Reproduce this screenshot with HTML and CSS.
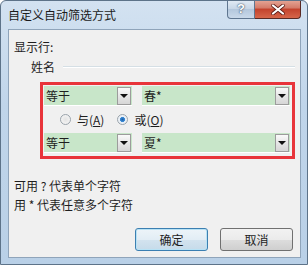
FILE: index.html
```html
<!DOCTYPE html>
<html lang="zh-CN">

<head>
    <meta charset="UTF-8">
    <title>自定义自动筛选方式</title>
    <link rel="stylesheet" href="styles.css">
</head>

<body>

    <div class="window">
        <!-- Title Bar -->
        <div class="titlebar">
            <span class="title">自定义自动筛选方式</span>
            <div class="caption-btns">
                <span class="help-btn">?</span>
                <span class="close-btn">
                    <svg width="14" height="11" viewBox="0 0 14 11">
                        <path d="M2 1.5 L12 9.5 M12 1.5 L2 9.5" stroke="#5a1a14" stroke-width="3.6" stroke-linecap="round"/>
                        <path d="M2 1.5 L12 9.5 M12 1.5 L2 9.5" stroke="#fff" stroke-width="2.2" stroke-linecap="round"/>
                    </svg>
                </span>
            </div>
        </div>

        <!-- Client Area -->
        <div class="client">
            <div class="label">显示行:</div>
            <div class="group-title">
                <span>姓名</span>
                <span class="sep"></span>
            </div>

            <div class="criteria">
                <div class="row">
                    <div class="combo op">
                        <span class="value">等于</span>
                        <span class="drop"><i></i></span>
                    </div>
                    <div class="combo val">
                        <span class="value">春*</span>
                        <span class="drop"><i></i></span>
                    </div>
                </div>
                <div class="radios">
                    <label class="radio"><span class="dot"></span><span>与(<u>A</u>)</span></label>
                    <label class="radio checked"><span class="dot"></span><span>或(<u>O</u>)</span></label>
                </div>
                <div class="row">
                    <div class="combo op">
                        <span class="value">等于</span>
                        <span class="drop"><i></i></span>
                    </div>
                    <div class="combo val">
                        <span class="value">夏*</span>
                        <span class="drop"><i></i></span>
                    </div>
                </div>
            </div>

            <div class="hints">
                <div>可用 ? 代表单个字符</div>
                <div>用 * 代表任意多个字符</div>
            </div>

            <div class="actions">
                <button class="btn default">确定</button>
                <button class="btn">取消</button>
            </div>
        </div>
    </div>

</body>

</html>
```

FILE: styles.css
```css
/* Basic layout */
body {
    margin: 0;
    padding: 0;
    font-family: "Noto Sans CJK SC", "DejaVu Sans", sans-serif;
    font-size: 12px;
    color: #1e1e1e;
}

/* Window frame */
.window {
    width: 308px;
    height: 265px;
    box-sizing: border-box;
    background: linear-gradient(180deg, #d3e2f1 0%, #c0d5ea 40%, #b9d0e7 100%);
    border: 1px solid #5d7389;
    border-radius: 6px 6px 0 0;
    display: flex;
    flex-direction: column;
    overflow: hidden;
}

/* Title bar */
.titlebar {
    height: 28px;
    display: flex;
    justify-content: space-between;
    flex-shrink: 0;
}

.title {
    padding: 5px 0 0 7px;
    font-size: 12px;
    color: #1b1b1b;
}

.caption-btns {
    display: flex;
    margin-right: 6px;
    height: 19px;
    margin-top: -1px;
}

.help-btn {
    width: 26px;
    height: 18px;
    border: 1px solid #5f7690;
    border-top: none;
    border-radius: 0 0 0 4px;
    background: linear-gradient(180deg, #e3ecf5 0%, #c7d6e6 50%, #b3c7dc 51%, #c9d9ea 100%);
    color: #fff;
    font-family: "Liberation Sans", Arial, sans-serif;
    font-weight: bold;
    font-size: 13px;
    text-align: center;
    line-height: 18px;
    text-shadow: 0 0 2px #3d5068, 0 0 1px #3d5068;
}

.close-btn {
    width: 45px;
    height: 18px;
    border: 1px solid #5a2a24;
    border-top: none;
    border-left: none;
    border-radius: 0 0 4px 0;
    background: linear-gradient(180deg, #e6a898 0%, #d47a68 45%, #c3422c 50%, #d6664a 100%);
    display: flex;
    justify-content: center;
    align-items: center;
}

/* Client area */
.client {
    margin: 0 6px 6px 7px;
    flex: 1;
    background: #f0f0f0;
    border: 1px solid #8fa4ba;
    padding: 8px 5px 0 5px;
    display: flex;
    flex-direction: column;
}

.label {
    line-height: 17px;
}

.group-title {
    display: flex;
    align-items: center;
    padding-left: 17px;
    margin-top: 3px;
    line-height: 17px;
}

.group-title .sep {
    flex: 1;
    margin-left: 8px;
    border-top: 1px solid #d5dfe5;
    border-bottom: 1px solid #fff;
}

/* Red highlight around criteria */
.criteria {
    margin: 7px 0 0 26px;
    width: 255px;
    height: 77px;
    box-sizing: border-box;
    border: 3px solid #e8343a;
    padding: 1px 2px 0 1px;
    display: flex;
    flex-direction: column;
}

.row {
    display: flex;
    gap: 10px;
}

.combo {
    height: 20px;
    box-sizing: border-box;
    background: #c8e6c9;
    border-bottom: 1px solid #fff;
    display: flex;
    align-items: center;
}

.combo.op {
    width: 88px;
}

.combo.val {
    flex: 1;
}

.combo .value {
    flex: 1;
    padding-left: 2px;
    line-height: 18px;
}

.drop {
    width: 14px;
    height: 18px;
    box-sizing: border-box;
    border: 1px solid #9c9c9c;
    background: linear-gradient(180deg, #fafafa 0%, #e6e6e6 50%, #d6d6d6 100%);
    display: flex;
    justify-content: center;
    align-items: center;
    margin-right: 1px;
}

.drop i {
    width: 0;
    height: 0;
    border-left: 4px solid transparent;
    border-right: 4px solid transparent;
    border-top: 4px solid #111;
}

/* Radio buttons */
.radios {
    height: 27px;
    display: flex;
    align-items: center;
    padding-left: 16px;
    gap: 13px;
}

.radio {
    display: flex;
    align-items: center;
    gap: 6px;
}

.radio .dot {
    width: 11px;
    height: 11px;
    box-sizing: border-box;
    border-radius: 50%;
    border: 1px solid #9aa3ab;
    background: radial-gradient(circle, #e4e4e4 0%, #f8f8f8 100%);
}

.radio.checked .dot {
    background: radial-gradient(circle, #1b5fa8 0%, #3c8ad4 35%, #e6eef6 45%, #f8f8f8 100%);
}

/* Hints */
.hints {
    margin-top: 17px;
    line-height: 19px;
}

/* Dialog buttons */
.actions {
    margin-top: 14px;
    display: flex;
    justify-content: flex-end;
    gap: 12px;
    padding-right: 2px;
}

.btn {
    width: 73px;
    height: 23px;
    font-family: "Noto Sans CJK SC", sans-serif;
    font-size: 12px;
    color: #1e1e1e;
    border: 1px solid #707070;
    border-radius: 3px;
    background: linear-gradient(180deg, #f2f2f2 0%, #ebebeb 50%, #dddddd 51%, #cfcfcf 100%);
    padding: 0;
}

.btn.default {
    border-color: #3c7fb1;
    box-shadow: inset 0 0 0 1px #b8e2f5;
    background: linear-gradient(180deg, #edf4f9 0%, #e2edf5 50%, #d3e3ef 51%, #c6dbea 100%);
}
```
